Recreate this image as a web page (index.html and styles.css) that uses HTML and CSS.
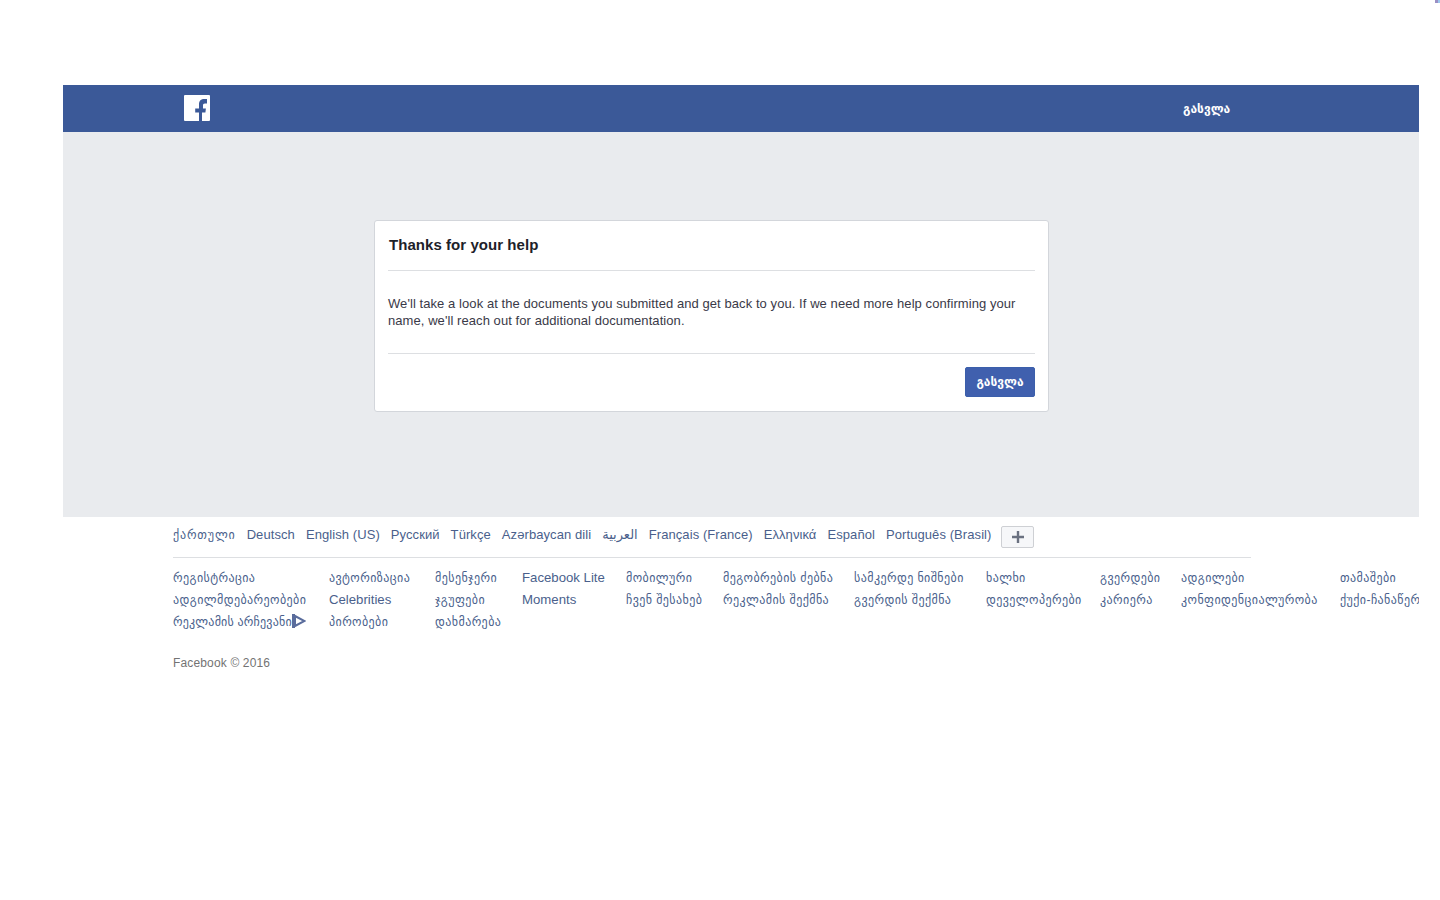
FILE: index.html
```html
<!DOCTYPE html>
<html lang="ka">
<head>
<meta charset="utf-8">
<title>Facebook</title>
<link rel="stylesheet" href="styles.css">
</head>
<body>
<div class="corner"><i class="corner-a"></i><i class="corner-b"></i></div>
<div class="shell">
  <header class="topbar">
    <svg class="logo" viewBox="0 0 26 26" width="26" height="26" aria-label="Facebook">
      <path fill="#fff" d="M1 0h24a1 1 0 0 1 1 1v24a1 1 0 0 1-1 1h-7V17.500h3.400l.5-4H19v-3c0-1.200.4-2 2-2h2V4.100C22.600 4 21.500 3.900 20.200 3.900 17.100 3.900 15 5.800 15 9.100v4.400h-3.800v4H15V26H1a1 1 0 0 1-1-1V1a1 1 0 0 1 1-1z"/>
    </svg>
    <a class="logout" href="#">გასვლა</a>
  </header>
  <main class="stage">
    <section class="card">
      <h1 class="card-title">Thanks for your help</h1>
      <p class="card-body">We'll take a look at the documents you submitted and get back to you. If we need more help confirming your name, we'll reach out for additional documentation.</p>
      <div class="card-actions"><button class="btn" type="button">გასვლა</button></div>
    </section>
  </main>
  <footer class="footer">
    <div class="langs">
      <a class="ka" href="#">ქართული</a><a href="#">Deutsch</a><a href="#">English (US)</a><a href="#">Русский</a><a href="#">Türkçe</a><a href="#">Azərbaycan dili</a><a class="ar" href="#">العربية</a><a href="#">Français (France)</a><a href="#">Ελληνικά</a><a href="#">Español</a><a href="#">Português (Brasil)</a>
      <button class="more" type="button" aria-label="More"><svg viewBox="0 0 12 12" width="12" height="12"><path fill="#6a7180" d="M4.800 0h2.400v4.800H12v2.400H7.200V12H4.800V7.200H0V4.800h4.800z"/></svg></button>
    </div>
    <nav class="links">
      <a href="#">რეგისტრაცია</a><a href="#">ავტორიზაცია</a><a href="#">მესენჯერი</a><a class="latin" href="#">Facebook Lite</a><a href="#">მობილური</a><a href="#">მეგობრების ძებნა</a><a href="#">სამკერდე ნიშნები</a><a href="#">ხალხი</a><a href="#">გვერდები</a><a href="#">ადგილები</a><a href="#">თამაშები</a>
      <a href="#">ადგილმდებარეობები</a><a class="latin" href="#">Celebrities</a><a href="#">ჯგუფები</a><a class="latin" href="#">Moments</a><a href="#">ჩვენ შესახებ</a><a href="#">რეკლამის შექმნა</a><a href="#">გვერდის შექმნა</a><a href="#">დეველოპერები</a><a href="#">კარიერა</a><a href="#">კონფიდენციალურობა</a><a href="#">ქუქი-ჩანაწერ</a>
      <a class="adchoice" href="#">რეკლამის არჩევანი<svg viewBox="0 0 14 14" width="14" height="14"><path fill="none" stroke="#5a6c9c" stroke-width="2" d="M3 2 12.500 7 3 12z"/><path fill="none" stroke="#5a6c9c" stroke-width="3" d="M1.500 0v14"/></svg></a><a href="#">პირობები</a><a href="#">დახმარება</a>
    </nav>
    <div class="copy">Facebook © 2016</div>
  </footer>
</div>
</body>
</html>
```
FILE: styles.css
```css
html, body { margin: 0; padding: 0; background: #fff; }
body {
  height: 900px;
  overflow: hidden;
  font-family: "Liberation Sans", "DejaVu Sans", sans-serif;
  font-size: 12px;
  color: #1d2129;
}
a { color: #365899; text-decoration: none; }

.corner { position: absolute; top: 0; right: 0; display: flex; width: 5px; height: 3px; }
.corner-a { flex: 1; background: #9a8fc4; }
.corner-b { flex: 1; background: #9cc8ee; }

.shell { margin: 85px 21px 0 63px; overflow: hidden; }

.topbar {
  display: flex;
  align-items: center;
  height: 47px;
  background: #3b5998;
  padding-left: 121px;
}
.logo { display: block; flex: none; margin-bottom: 2px; }
.logout {
  margin-left: 973px;
  color: #fff;
  font-weight: bold;
  font-size: 12px;
}

.stage {
  height: 385px;
  background: #e9ebee;
  padding: 88px 0 0 311px;
  box-sizing: border-box;
}
.card {
  width: 675px;
  height: 192px;
  box-sizing: border-box;
  background: #fff;
  border: 1px solid #d3d6db;
  border-radius: 3px;
  padding: 0 13px;
  display: flex;
  flex-direction: column;
}
.card-title {
  margin: 0;
  height: 50px;
  box-sizing: border-box;
  padding: 15px 0 0 1px;
  border-bottom: 1px solid #dddfe2;
  font-size: 15px;
  line-height: 18px;
  font-weight: bold;
  letter-spacing: .05px;
  color: #1d2129;
}
.card-body {
  margin: 0;
  height: 83px;
  box-sizing: border-box;
  padding-top: 24px;
  border-bottom: 1px solid #dddfe2;
  font-size: 13px;
  line-height: 17px;
  letter-spacing: .07px;
  color: #3a3a48;
}
.card-actions { display: flex; justify-content: flex-end; padding-top: 13px; }
.btn {
  width: 70px;
  height: 30px;
  padding: 0;
  border: 1px solid #3b5fab;
  border-radius: 2px;
  background: #4060ae;
  color: #fff;
  font-family: inherit;
  font-size: 12px;
  font-weight: bold;
}

.footer { padding-left: 110px; color: #737373; }
.langs {
  width: 1078px;
  height: 41px;
  box-sizing: border-box;
  border-bottom: 1px solid #dddfe2;
  display: flex;
  align-items: flex-start;
  gap: 11px;
  padding-top: 9px;
  line-height: 18px;
  font-size: 13px;
  letter-spacing: .08px;
  white-space: nowrap;
}
.langs a { color: #4a5f8c; }
.langs .ka { font-size: 12px; letter-spacing: .85px; }
.langs .ar { font-size: 13px; letter-spacing: 0; }
.more {
  width: 33px;
  height: 22px;
  margin-left: -1.500px;
  padding: 0;
  border: 1px solid #ced0d4;
  border-radius: 2px;
  background: #f6f7f9;
  display: flex;
  align-items: center;
  justify-content: center;
}
.links {
  display: grid;
  grid-template-columns: 156px 106px 87px 104px 97px 131px 132px 114px 81px 159px 100px;
  grid-auto-rows: 22px;
  padding-top: 9px;
  line-height: 22px;
  letter-spacing: .42px;
  white-space: nowrap;
}
.links a { color: #4a5f8c; }
.links .latin { font-size: 13.200px; letter-spacing: 0; line-height: 21px; }
.links .adchoice { display: flex; align-items: center; letter-spacing: .2px; }
.adchoice svg { margin-bottom: 3px; }
.copy { margin-top: 22px; line-height: 16px; letter-spacing: .15px; color: #737373; }
```
